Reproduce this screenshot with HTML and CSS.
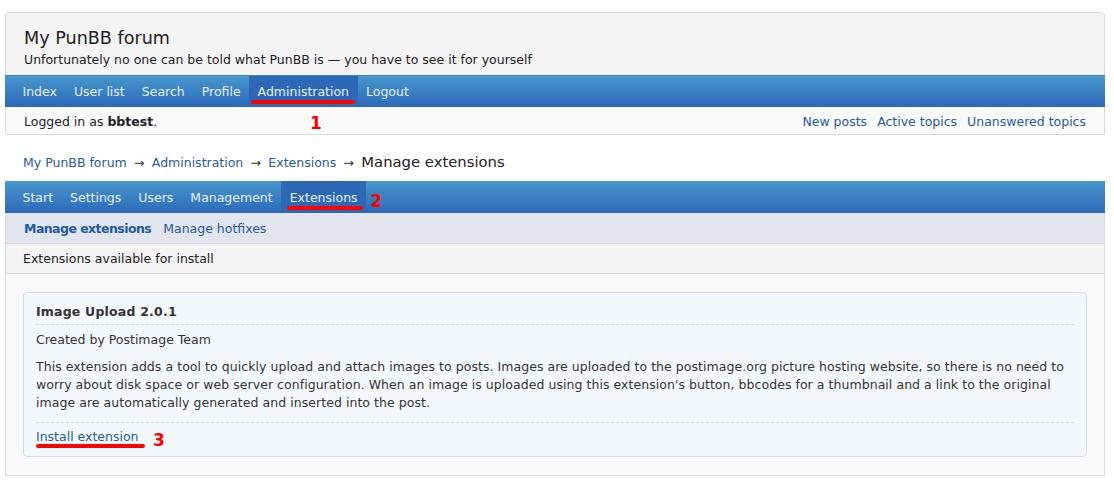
FILE: index.html
```html
<!DOCTYPE html>
<html lang="en">
<head>
<meta charset="utf-8">
<title>Manage extensions</title>
<link rel="stylesheet" href="styles.css">
</head>
<body>
<div class="page">
  <div class="head">
    <div class="brand">
      <div class="title">My PunBB forum</div>
      <div class="desc">Unfortunately no one can be told what PunBB is — you have to see it for yourself</div>
    </div>
    <ul class="nav">
      <li><a href="#">Index</a></li>
      <li><a href="#">User list</a></li>
      <li><a href="#">Search</a></li>
      <li><a href="#">Profile</a></li>
      <li class="active mark-wrap"><a href="#">Administration</a><span class="mark m1"></span><span class="num n1">1</span></li>
      <li><a href="#">Logout</a></li>
    </ul>
    <div class="status">
      <div class="who">Logged in as <strong>bbtest</strong>.</div>
      <div class="links"><a href="#">New posts</a><a href="#">Active topics</a><a href="#">Unanswered topics</a></div>
    </div>
  </div>

  <div class="crumbs"><a href="#">My PunBB forum</a><span class="arr">→</span><a href="#">Administration</a><span class="arr">→</span><a href="#">Extensions</a><span class="arr">→</span><span class="here">Manage extensions</span></div>

  <div class="admin">
    <ul class="nav">
      <li><a href="#">Start</a></li>
      <li><a href="#">Settings</a></li>
      <li><a href="#">Users</a></li>
      <li><a href="#">Management</a></li>
      <li class="active mark-wrap"><a href="#">Extensions</a><span class="mark m2"></span><span class="num n2">2</span></li>
    </ul>
    <div class="subnav"><a href="#" class="cur">Manage extensions</a><a href="#">Manage hotfixes</a></div>
    <div class="sechead">Extensions available for install</div>
    <div class="content">
      <div class="ext">
        <h3>Image Upload 2.0.1</h3>
        <div class="meta">Created by Postimage Team</div>
        <p class="about">This extension adds a tool to quickly upload and attach images to posts. Images are uploaded to the postimage.org picture hosting website, so there is no need to worry about disk space or web server configuration. When an image is uploaded using this extension's button, bbcodes for a thumbnail and a link to the original image are automatically generated and inserted into the post.</p>
        <div class="opts"><span class="mark-wrap"><a href="#">Install extension</a><span class="mark m3"></span><span class="num n3">3</span></span></div>
      </div>
    </div>
  </div>
</div>
</body>
</html>
```

FILE: styles.css
```css
html, body {
  margin: 0;
  padding: 0;
  background: #fff;
}
body {
  font-family: "DejaVu Sans", Verdana, sans-serif;
  font-size: 12.5px;
  color: #333;
}
a {
  color: #1f5b9d;
  text-decoration: none;
}
.page {
  padding: 12px 9px 6px 5px;
}
.head {
  border: 1px solid #d6dae2;
  border-radius: 4px 4px 0 0;
  background: #f4f4f4;
}
.brand {
  padding: 14px 18px 6px;
}
.title {
  font-size: 17.6px;
  line-height: 22px;
  color: #222;
  margin-bottom: 2px;
}
.desc {
  line-height: 18px;
  color: #222;
}
.nav {
  list-style: none;
  margin: 0 -1px;
  padding: 0 0 0 9px;
  display: flex;
  height: 31px;
  background: linear-gradient(#4897cd, #2c69b9);
  border-top: 1px solid #3d7fc2;
}
.nav li {
  line-height: 31px;
}
.nav li a {
  display: block;
  padding: 0 8.5px;
  color: #e6eef8;
}
.nav li.active {
  background: #2c68b6;
}
.status {
  display: flex;
  justify-content: space-between;
  background: #fafafa;
  height: 27px;
  line-height: 29px;
  padding: 0 18px;
  color: #222;
}
.status strong {
  color: #222;
}
.links a {
  margin-left: 10px;
}
.crumbs {
  padding: 0 18px;
  height: 46px;
  line-height: 54px;
}
.crumbs .arr {
  color: #333;
  margin: 0 7.3px;
}
.crumbs .here {
  font-size: 14.8px;
  color: #222;
}
.admin {
  border: 1px solid #d6dae2;
  border-top: none;
}
.admin .nav {
  border-top: none;
  height: 32px;
}
.admin .nav li {
  line-height: 33px;
}
.subnav {
  background: #e2e4ee;
  height: 30px;
  line-height: 31px;
  padding: 0 18px;
  border-bottom: 1px solid #d2d6de;
}
.subnav a {
  margin-right: 12px;
}
.subnav a.cur {
  font-weight: bold;
  letter-spacing: -0.55px;
}
.sechead {
  background: #f3f3f3;
  height: 29px;
  line-height: 30px;
  padding: 0 17px;
  color: #222;
  border-bottom: 1px solid #d2d6de;
}
.content {
  background: #fafafb;
  padding: 18px 17px 18px;
}
.ext {
  background: #f3f8fc;
  border: 1px solid #d6dde6;
  border-radius: 4px;
  padding: 0 12px;
}
.ext h3 {
  margin: 0;
  font-size: 12.5px;
  line-height: 18px;
  padding: 10px 0 3px;
  border-bottom: 1px dashed #d8dde3;
  color: #333;
  letter-spacing: 0.2px;
}
.meta {
  padding-top: 6px;
  line-height: 18px;
}
.about {
  margin: 9px 0 0;
  line-height: 18px;
  padding-bottom: 10px;
  border-bottom: 1px dashed #d8dde3;
  letter-spacing: 0.05px;
}
.opts {
  padding: 5px 0 10px;
  line-height: 18px;
}
.mark-wrap {
  position: relative;
}
.mark {
  position: absolute;
  height: 4px;
  border-radius: 2px;
  background: #f00;
}
.num {
  position: absolute;
  color: #f00;
  font-size: 17px;
  font-weight: bold;
  line-height: 17px;
  font-family: "DejaVu Sans", sans-serif;
}
.m1 { left: 2px; right: 3px; top: 24px; }
.n1 { left: 61px; top: 39px; }
.m2 { left: 6px; right: 3px; top: 25px; }
.n2 { left: 89px; top: 12px; }
.m3 { left: 0; width: 109px; top: 15px; }
.n3 { left: 117px; top: 3px; }
```
